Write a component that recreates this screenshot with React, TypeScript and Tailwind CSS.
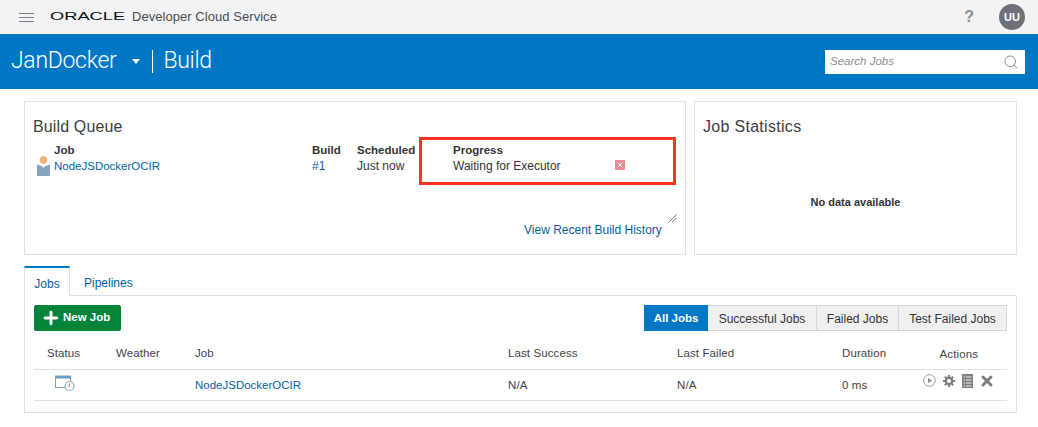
import { Plus, Search, X } from 'lucide-react';

const font = { fontFamily: '"Liberation Sans", Arial, sans-serif' };
const titleFont = { fontFamily: 'Roboto, "Liberation Sans", sans-serif' };

function Header() {
  return (
    <>
      <div className="flex h-[34px] items-center bg-[#f2f3f5] pl-[19px] pr-[13px]">
        <div className="flex w-[15px] flex-col gap-[3px]">
          <span className="h-px bg-[#7d7f83]" />
          <span className="h-px bg-[#7d7f83]" />
          <span className="h-px bg-[#7d7f83]" />
        </div>
        <span className="ml-[16px] inline-block w-[73px] origin-left scale-x-[1.59] text-[11.5px] leading-none whitespace-nowrap text-[#111]">
          ORACLE
        </span>
        <span className="ml-[9px] text-[13px] tracking-[0.05px] text-[#4a4c50]">Developer Cloud Service</span>
        <span className="ml-auto text-[16px] font-bold text-[#8b8d91]">?</span>
        <div className="ml-[25px] flex h-[26px] w-[26px] items-center justify-center rounded-full bg-[#6f7078] text-[11px] font-bold text-white">
          UU
        </div>
      </div>
      <div className="flex h-[55px] items-center bg-[#0077c5] pl-[11px] pr-[13px] text-white" style={titleFont}>
        <span className="text-[23px] font-light tracking-[-0.3px]">JanDocker</span>
        <span className="ml-[16px] h-0 w-0 border-x-[4.5px] border-t-[5px] border-x-transparent border-t-white" />
        <span className="ml-[12px] h-[23px] w-px bg-white" />
        <span className="ml-[10px] text-[23px] font-light tracking-[-0.3px]">Build</span>
        <div className="ml-auto flex h-[24px] w-[200px] items-center justify-between bg-white pl-[5px] pr-[6px]" style={font}>
          <span className="text-[11.5px] text-[#8c8e92] italic">Search Jobs</span>
          <Search className="h-[16px] w-[16px] text-[#8c8e92]" strokeWidth={1.5} />
        </div>
      </div>
    </>
  );
}

function PersonIcon() {
  return (
    <svg width="14" height="20" viewBox="0 0 14 20" className="shrink-0">
      <circle cx="6.5" cy="4" r="3.4" fill="#f3b67a" stroke="#d99a5e" strokeWidth="0.5" />
      <path d="M0 8.5l4.5 1.5h4l4.5-1.5V20H0z" fill="#87a4bb" />
      <path d="M4.5 9.5h4l-2 2.5z" fill="#fff" />
    </svg>
  );
}

function BuildQueue() {
  return (
    <div className="relative h-[154px] w-[662px] shrink-0 border border-[#dfe1e3] pl-[8px]">
      <h2 className="mt-[15px] text-[16px] leading-[20px] tracking-[0.13px] text-[#3d3d3d]">Build Queue</h2>
      <div className="mt-[5px] grid grid-cols-[279px_45px_96px_1fr] text-[12px] leading-[16px] text-[#333]">
        <div className="pl-[21px] text-[11.5px] font-bold">Job</div>
        <div className="text-[11.5px] font-bold">Build</div>
        <div className="text-[11.5px] font-bold">Scheduled</div>
        <div className="text-[11.5px] font-bold">Progress</div>
        <div className="pl-[21px] text-[11.5px] text-[#00629e]">NodeJSDockerOCIR</div>
        <div className="text-[#00629e]">#1</div>
        <div>Just now</div>
        <div>Waiting for Executor</div>
      </div>
      {/* icon hangs left of the job link */}
      <div className="absolute left-[12px] top-[54px]">
        <PersonIcon />
      </div>
      {/* cancel button */}
      <div className="absolute left-[590px] top-[58px] flex h-[10px] w-[10px] items-center justify-center rounded-[1px] bg-[#ee8a93]">
        <X className="h-[8px] w-[8px] text-white" strokeWidth={3} />
      </div>
      {/* red annotation */}
      <div className="absolute left-[394px] top-[35px] h-[48px] w-[257px] border-[3px] border-[#fb3320]" />
      <svg width="9" height="9" viewBox="0 0 9 9" className="absolute left-[643px] top-[112px]">
        <path d="M0.5 8.5L8.5 0.5M4 8.5L8.5 4" stroke="#555" strokeWidth="0.8" />
      </svg>
      <a className="absolute left-[499px] top-[120px] text-[12px] leading-[16px] text-[#00629e]">
        View Recent Build History
      </a>
    </div>
  );
}

function JobStats() {
  return (
    <div className="flex h-[154px] w-[323px] shrink-0 flex-col border border-[#dfe1e3] pl-[8px]">
      <h2 className="mt-[15px] text-[16px] leading-[20px] tracking-[0.3px] text-[#3d3d3d]">Job Statistics</h2>
      <p className="mt-[57px] w-full pr-[8px] text-center text-[11px] leading-[16px] font-bold text-[#333]">
        No data available
      </p>
    </div>
  );
}

function Tabs() {
  return (
    <div className="relative z-10 -mb-px flex h-[30px] text-[12px] text-[#00629e]">
      <div className="flex w-[46px] items-center justify-center border-x border-t-2 border-x-[#dfe1e3] border-t-[#0077c5] bg-white pt-[3px]">
        Jobs
      </div>
      <div className="flex items-center pl-[14px] pt-[3px]">Pipelines</div>
    </div>
  );
}

const filters = [
  { label: 'Successful Jobs', w: 'w-[109px]' },
  { label: 'Failed Jobs', w: 'w-[82px]' },
  { label: 'Test Failed Jobs', w: 'w-[108px]' },
];

function JobsPanel() {
  return (
    <div className="h-[118px] w-[993px] border border-[#dfe1e3] pl-[9px] pr-[9px]">
      <div className="flex items-start justify-between pt-[9px]">
        <button className="flex h-[26px] w-[87px] items-center gap-[2px] rounded-[2px] bg-[#04843b] pl-[7px] text-[11.5px] font-bold text-white">
          <Plus className="h-[20px] w-[20px]" strokeWidth={3.5} />
          New Job
        </button>
        <div className="flex h-[26px] text-[12px]">
          <div className="flex w-[64px] items-center justify-center bg-[#0077c5] pt-px text-[11.5px] font-bold text-white">All Jobs</div>
          {filters.map((f) => (
            <div
              key={f.label}
              className={`flex ${f.w} items-center justify-center border border-l-0 border-[#d3d5d7] bg-[#f0f0f0] pt-px text-[#333]`}
            >
              {f.label}
            </div>
          ))}
        </div>
      </div>
      <div className="mt-[5px] grid h-[34px] grid-cols-[69px_79px_313px_169px_165px_1fr] items-center border-b border-[#dfe1e3] pb-px pl-[13px] pt-[3px] text-[11.5px] tracking-[0.1px] text-[#444]">
        <div>Status</div>
        <div>Weather</div>
        <div>Job</div>
        <div>Last Success</div>
        <div>Last Failed</div>
        <div className="flex justify-between pr-[29px]">
          <span>Duration</span>
          <span className="translate-y-px">Actions</span>
        </div>
      </div>
      <div className="grid h-[31px] grid-cols-[69px_79px_313px_169px_165px_1fr] items-center border-b border-[#dfe1e3] pl-[13px] pt-px text-[11.5px] tracking-[0.1px] text-[#444]">
        <div className="-translate-y-[2px] pl-[8px]">
          <svg width="20" height="17" viewBox="0 0 20 16">
            <rect x="0.5" y="0.5" width="15" height="11.5" fill="#fff" stroke="#7f9fbc" />
            <rect x="0.5" y="0.5" width="15" height="2.5" fill="#6d9ccc" />
            <circle cx="14.5" cy="10.5" r="4.5" fill="#fff" stroke="#7fb0b8" strokeWidth="1.2" />
            <path d="M14.5 8v2.8h-1.5" fill="none" stroke="#c0614f" strokeWidth="0.8" />
          </svg>
        </div>
        <div />
        <div className="tracking-normal text-[#00629e]">NodeJSDockerOCIR</div>
        <div>N/A</div>
        <div>N/A</div>
        <div className="flex items-center">
          <span className="w-[25px] whitespace-nowrap">0 ms</span>
          <div className="ml-[56px] -translate-y-[5px] flex items-center gap-[6px]">
            <svg width="13" height="13" viewBox="0 0 13 13">
              <circle cx="6.5" cy="6.5" r="5.8" fill="none" stroke="#8f9195" strokeWidth="0.9" />
              <path d="M5 3.8l4 2.7-4 2.7z" fill="#8f9195" />
            </svg>
            <svg width="14" height="14" viewBox="0 0 14 14">
              <circle cx="7" cy="7" r="3.2" fill="none" stroke="#7d7f83" strokeWidth="2.4" />
              <path
                d="M7 1v2.5M7 10.5V13M1 7h2.5M10.5 7H13M2.8 2.8l1.8 1.8M9.4 9.4l1.8 1.8M11.2 2.8L9.4 4.6M4.6 9.4l-1.8 1.8"
                stroke="#7d7f83"
                strokeWidth="2"
              />
            </svg>
            <svg width="11" height="14" viewBox="0 0 11 14">
              <rect width="11" height="14" fill="#7d7f83" />
              <path d="M1.5 3h1.5M4 3h5.5M1.5 6h1.5M4 6h5.5M1.5 9h1.5M4 9h5.5M1.5 12h1.5M4 12h5.5" stroke="#eee" strokeWidth="1" />
            </svg>
            <X className="h-[16px] w-[16px] text-[#7d7f83]" strokeWidth={4.5} />
          </div>
        </div>
      </div>
    </div>
  );
}

export default function App() {
  return (
    <div className="h-[427px] w-[1038px] overflow-hidden bg-white" style={font}>
      <Header />
      <div className="pl-[24px] pr-[21px] pt-[12px]">
        <div className="flex gap-[8px]">
          <BuildQueue />
          <JobStats />
        </div>
        <div className="mt-[11px]">
          <Tabs />
          <JobsPanel />
        </div>
      </div>
    </div>
  );
}
